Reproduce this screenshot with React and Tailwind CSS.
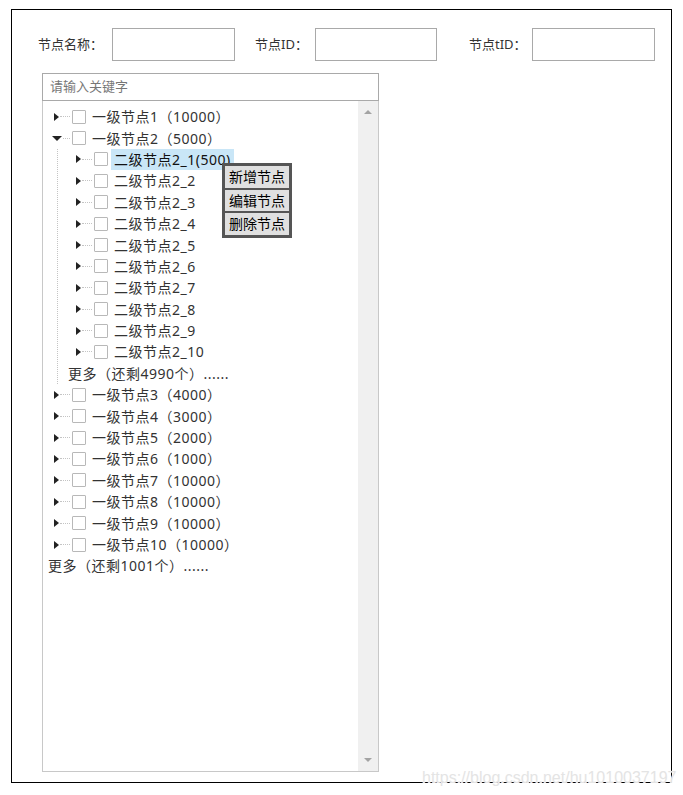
import React from 'react';

const level2 = ['2_2', '2_3', '2_4', '2_5', '2_6', '2_7', '2_8', '2_9', '2_10'];
const level1Rest = [
  ['3', '4000'],
  ['4', '3000'],
  ['5', '2000'],
  ['6', '1000'],
  ['7', '10000'],
  ['8', '10000'],
  ['9', '10000'],
  ['10', '10000'],
];

function Switch({ open }) {
  return (
    <span className="w-[19px] h-full flex items-center shrink-0">
      {open ? (
        <span className="ml-[-1px] w-0 h-0 border-x-[5px] border-x-transparent border-t-[5px] border-t-[#222] shrink-0" />
      ) : (
        <span className="ml-[1px] w-0 h-0 border-y-[4.5px] border-y-transparent border-l-[5px] border-l-[#222] shrink-0" />
      )}
      <span className="flex-1 ml-[1px] mr-[2px] border-t border-dotted border-[#c4c4c4]" />
    </span>
  );
}

function Checkbox() {
  return <span className="w-[14px] h-[14px] shrink-0 border border-[#b8b8b8] bg-white rounded-[1px]" />;
}

function Row({ pad, open, label, selected }) {
  return (
    <div className={`h-[21.4px] flex items-center ${pad}`}>
      <Switch open={open} />
      <Checkbox />
      {selected ? (
        <span className="ml-[3px] px-[3px] h-[21px] flex items-center bg-[#c9e6f7] text-[#111] whitespace-nowrap">
          {label}
        </span>
      ) : (
        <span className="ml-[6px] text-[#333] whitespace-nowrap">{label}</span>
      )}
    </div>
  );
}

export default function App() {
  return (
    <div className="w-[683px] h-[795px] bg-white pt-[9px] pl-[11px] relative" style={{ fontFamily: '"Noto Sans", "Noto Sans CJK SC", sans-serif' }}>
      <div className="w-[661px] h-[774px] border border-black">
        {/* 查询条件 */}
        <div className="flex items-center mt-[18px] text-[13px] text-[#333]">
          <span className="ml-[26px] w-[74px]">节点名称：</span>
          <input className="w-[123px] h-[33px] border border-[#a9a9a9] outline-none" />
          <span className="ml-[20px] w-[60px]">节点ID：</span>
          <input className="w-[122px] h-[33px] border border-[#a9a9a9] outline-none" />
          <span className="ml-[32px] w-[63px]">节点tID：</span>
          <input className="w-[123px] h-[33px] border border-[#a9a9a9] outline-none" />
        </div>

        {/* 搜索框 */}
        <div className="ml-[30px] mt-[12px] w-[337px] h-[28px] border border-[#a9a9a9] flex items-center pl-[7px] text-[13px] text-[#777]">
          请输入关键字
        </div>

        {/* 树 */}
        <div className="ml-[30px] w-[337px] h-[671px] border border-t-0 border-[#c8c8c8] flex relative">
          <div className="flex-1 pt-[5px] text-[14px] tracking-[0.5px]">
            <Row pad="pl-[10px]" label="一级节点1（10000）" />
            <Row pad="pl-[10px]" open label="一级节点2（5000）" />
            <div className="ml-[14px] border-l border-dotted border-[#c4c4c4]">
              <Row pad="pl-[17px]" label="二级节点2_1(500)" selected />
              {level2.map((n) => (
                <Row key={n} pad="pl-[17px]" label={`二级节点${n}`} />
              ))}
              <div className="h-[21.4px] flex items-center pl-[10px] text-[#333] whitespace-nowrap">
                更多（还剩4990个）......
              </div>
            </div>
            {level1Rest.map(([n, c]) => (
              <Row key={n} pad="pl-[10px]" label={`一级节点${n}（${c}）`} />
            ))}
            <div className="h-[21.4px] flex items-center pl-[5px] text-[#333] whitespace-nowrap">
              更多（还剩1001个）......
            </div>
          </div>

          {/* 滚动条 */}
          <div className="w-[20px] h-full bg-[#f0f0f0] flex flex-col items-center justify-between py-[9px]">
            <span className="w-0 h-0 border-x-[4px] border-x-transparent border-b-[4px] border-b-[#a3a3a3]" />
            <span className="w-0 h-0 border-x-[4px] border-x-transparent border-t-[4px] border-t-[#a3a3a3]" />
          </div>

          {/* 右键菜单 */}
          <div className="absolute left-[179px] top-[62px] border-[3px] border-[#555] bg-[#555] flex flex-col gap-[2px] text-[14px] text-black">
            <div className="h-[21.5px] bg-[#e0e0e0] px-[4px] flex items-center">新增节点</div>
            <div className="h-[21.5px] bg-[#e0e0e0] px-[4px] flex items-center">编辑节点</div>
            <div className="h-[21.5px] bg-[#e0e0e0] px-[4px] flex items-center">删除节点</div>
          </div>
        </div>
      </div>

      {/* 水印 */}
      <span
        className="absolute left-[422px] top-[766px] text-[16px] text-[#e4e4e4] whitespace-nowrap"
        style={{ fontFamily: '"Liberation Sans", Arial, sans-serif', textShadow: '0 0 1px #fff, 0 0 1px #fff' }}
      >
        https://blog.csdn.net/hu1010037197
      </span>
    </div>
  );
}
